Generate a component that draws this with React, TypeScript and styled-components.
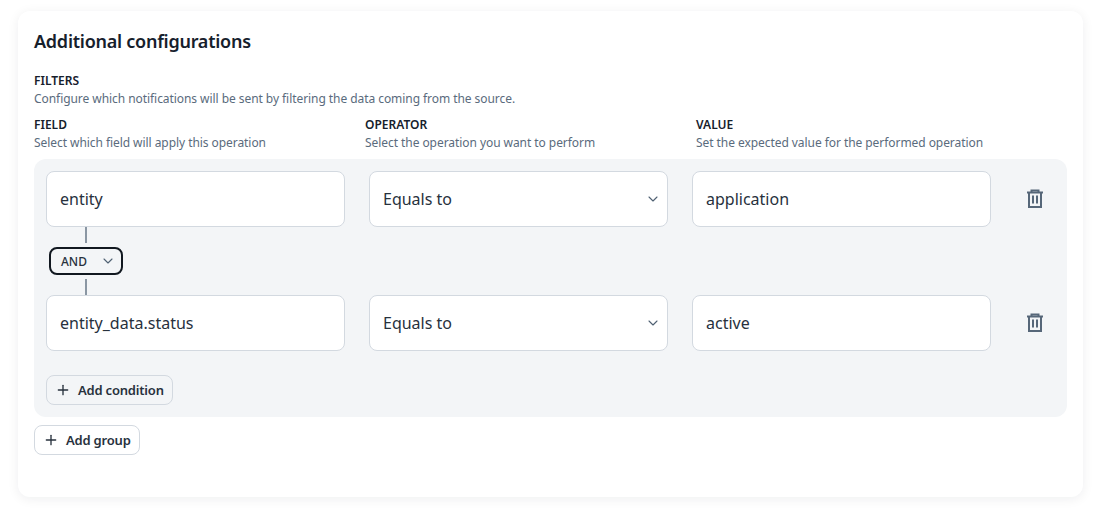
import styled, { createGlobalStyle } from 'styled-components'
import { ChevronDown, Plus } from 'lucide-react'

const GlobalStyle = createGlobalStyle`
	* {
		box-sizing: border-box;
	}

	html, body {
		margin: 0;
		background: #ffffff;
		font-family: 'Noto Sans', 'Liberation Sans', sans-serif;
	}
`

const columns = [
	{ title: 'FIELD', hint: 'Select which field will apply this operation' },
	{ title: 'OPERATOR', hint: 'Select the operation you want to perform' },
	{ title: 'VALUE', hint: 'Set the expected value for the performed operation' },
]

const TrashIcon = () => (
	<svg width='24' height='24' viewBox='0 0 24 24' fill='none' stroke='#566779' strokeWidth='2'>
		<path d='M4 5.5h16' />
		<path d='M8.5 5V3.5h7V5' />
		<path d='M6 5.5V20h12V5.5' />
		<path d='M10 8.5v8M14 8.5v8' />
	</svg>
)

const FilterRow = ({ field, value }: { field: string; value: string }) => (
	<Row>
		<TextBox>{field}</TextBox>
		<SelectBox>
			Equals to
			<ChevronDown size={16} color='#4f6072' strokeWidth={1.6} />
		</SelectBox>
		<TextBox>{value}</TextBox>
		<DeleteButton>
			<TrashIcon />
		</DeleteButton>
	</Row>
)

export default function App() {
	return (
		<Page>
			<GlobalStyle />
			<Card>
				<Title>Additional configurations</Title>
				<SectionTitle>FILTERS</SectionTitle>
				<Hint>Configure which notifications will be sent by filtering the data coming from the source.</Hint>
				<Columns>
					{columns.map(column => (
						<div key={column.title}>
							<SectionTitle>{column.title}</SectionTitle>
							<Hint>{column.hint}</Hint>
						</div>
					))}
				</Columns>
				<GroupPanel>
					<FilterRow field='entity' value='application' />
					<Connector>
						<ConnectorLine />
						<AndSelect>
							AND
							<ChevronDown size={16} color='#4f6072' strokeWidth={1.6} />
						</AndSelect>
						<ConnectorLine />
					</Connector>
					<FilterRow field='entity_data.status' value='active' />
					<AddCondition>
						<Plus size={16} color='#27313d' strokeWidth={2} />
						Add condition
					</AddCondition>
				</GroupPanel>
				<AddButton>
					<Plus size={16} color='#27313d' strokeWidth={2} />
					Add group
				</AddButton>
			</Card>
		</Page>
	)
}

const Page = styled.div`
	padding: 11px 18px 16px;
`

const Card = styled.div`
	display: flex;
	flex-direction: column;
	align-items: flex-start;

	height: 486px;
	padding: 16px;

	background: #ffffff;
	border-radius: 12px;
	box-shadow: 0 2px 12px rgba(16, 24, 40, 0.07);
`

const Title = styled.h2`
	margin: 0 0 17px;

	font-size: 18px;
	font-weight: 600;
	line-height: 28px;
	letter-spacing: -0.25px;
	color: #16202c;
`

const SectionTitle = styled.div`
	font-size: 12px;
	font-weight: 600;
	line-height: 18px;
	color: #16202c;
`

const Hint = styled.div`
	font-size: 12px;
	line-height: 18px;
	letter-spacing: -0.06px;
	color: #5a6b7d;
`

const Columns = styled.div`
	display: grid;
	grid-template-columns: repeat(3, 331px);

	margin: 8px 0 7px;
`

const GroupPanel = styled.div`
	display: flex;
	flex-direction: column;
	align-items: flex-start;
	align-self: stretch;

	padding: 12px;
	margin-bottom: 8px;

	background: #f3f5f7;
	border-radius: 12px;
`

const Row = styled.div`
	display: flex;
	align-items: center;
	gap: 24px;
`

const TextBox = styled.div`
	display: flex;
	align-items: center;
	justify-content: space-between;

	width: 299px;
	height: 56px;
	padding: 0 13px;

	font-size: 16px;
	color: #27313d;

	background: #ffffff;
	border: 1px solid #d3d9e0;
	border-radius: 8px;
`

const SelectBox = styled(TextBox)`
	padding-right: 6px;
`

const DeleteButton = styled.div`
	display: flex;
	justify-content: center;

	width: 40px;
`

const Connector = styled.div`
	display: flex;
	flex-direction: column;
	align-items: center;
	gap: 4px;

	margin-left: 3px;
`

const ConnectorLine = styled.div`
	width: 2px;
	height: 16px;

	background: #8a96a3;
`

const AndSelect = styled.div`
	display: flex;
	align-items: center;
	justify-content: space-between;

	width: 74px;
	height: 28px;
	padding: 0 5px 0 10px;

	font-size: 12px;
	font-weight: 500;
	color: #27313d;

	border: 2px solid #111820;
	border-radius: 8px;
`

const AddButton = styled.div`
	display: flex;
	align-items: center;
	gap: 7px;

	height: 30px;
	padding: 0 8px;

	font-size: 13px;
	font-weight: 600;
	letter-spacing: -0.2px;
	color: #27313d;

	background: #ffffff;
	border: 1px solid #d3d9e0;
	border-radius: 8px;
`

const AddCondition = styled(AddButton)`
	margin-top: 24px;

	background: #f3f5f7;
`
